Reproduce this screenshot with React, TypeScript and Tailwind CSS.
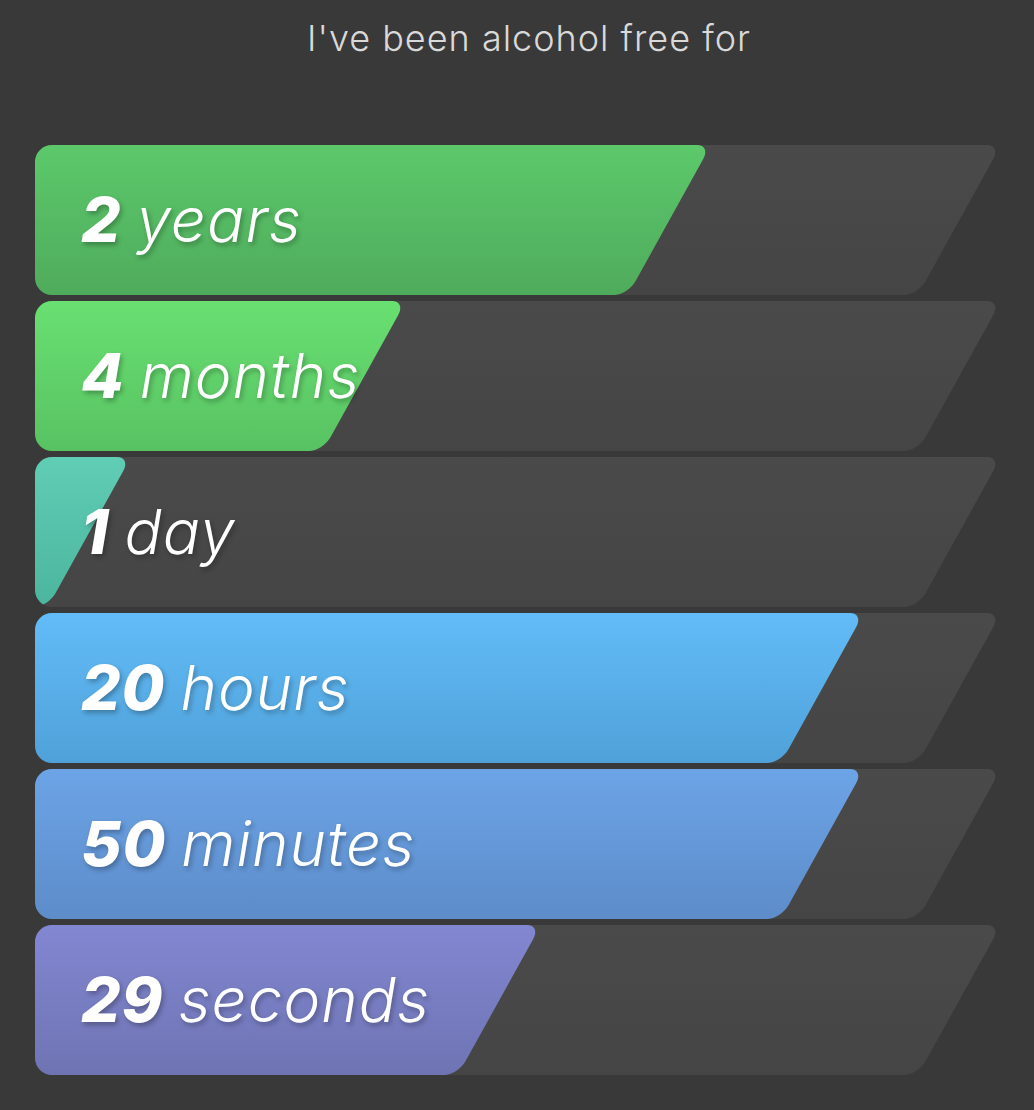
import React from 'react';

const rows = [
  { value: '2', unit: 'years', edge: 705, color: 'from-[#5cc96b] to-[#4fab5c]' },
  { value: '4', unit: 'months', edge: 400, color: 'from-[#69e072] to-[#58c262]' },
  { value: '1', unit: 'day', edge: 125, color: 'from-[#60cdb5] to-[#4cb59e]' },
  { value: '20', unit: 'hours', edge: 858, color: 'from-[#62bcf8] to-[#50a1d9]' },
  { value: '50', unit: 'minutes', edge: 858, color: 'from-[#6ca4e7] to-[#5d8cc9]' },
  { value: '29', unit: 'seconds', edge: 535, color: 'from-[#8287d1] to-[#6e74b3]' },
];

// the track starts this far left of the row so its slanted left side is clipped away
const BLEED = 100;
const ROW_LEFT = 35;

function Row({ value, unit, edge, color }: (typeof rows)[number]) {
  return (
    <div className="grid h-[150px] overflow-hidden rounded-l-[17px]">
      <div className="col-start-1 row-start-1 -ml-[100px] h-full w-[calc(100%+100px)] origin-top -skew-x-[29deg]">
        <div className="relative h-full w-full rounded-[14px] bg-linear-to-b from-[#4a4a4a] to-[#454545]">
          <div
            className={`absolute inset-y-0 left-0 rounded-[14px] bg-linear-to-b ${color}`}
            style={{ width: edge - ROW_LEFT + BLEED + 6 }}
          />
        </div>
      </div>
      <div className="relative col-start-1 row-start-1 flex items-center pl-[46px] text-[62px] leading-none text-white italic [text-shadow:2px_3px_5px_rgba(0,0,0,0.28)]">
        <span className="font-extrabold tracking-[1px]">{value}</span>
        <span className="ml-[15px] font-light tracking-[1px]">{unit}</span>
      </div>
    </div>
  );
}

export default function App() {
  return (
    <div className="min-h-screen bg-[#393939] font-['Inter','Liberation_Sans',sans-serif]">
      <div className="pt-[16px] pl-[24px] text-center text-[36px] leading-[44px] font-light tracking-[1px] text-[#d9d9d9]">
        I've been alcohol free for
      </div>
      <div className="mt-[85px] flex flex-col gap-[6px] pl-[35px] pr-[33px]">
        {rows.map((row) => (
          <Row key={row.unit} {...row} />
        ))}
      </div>
    </div>
  );
}
